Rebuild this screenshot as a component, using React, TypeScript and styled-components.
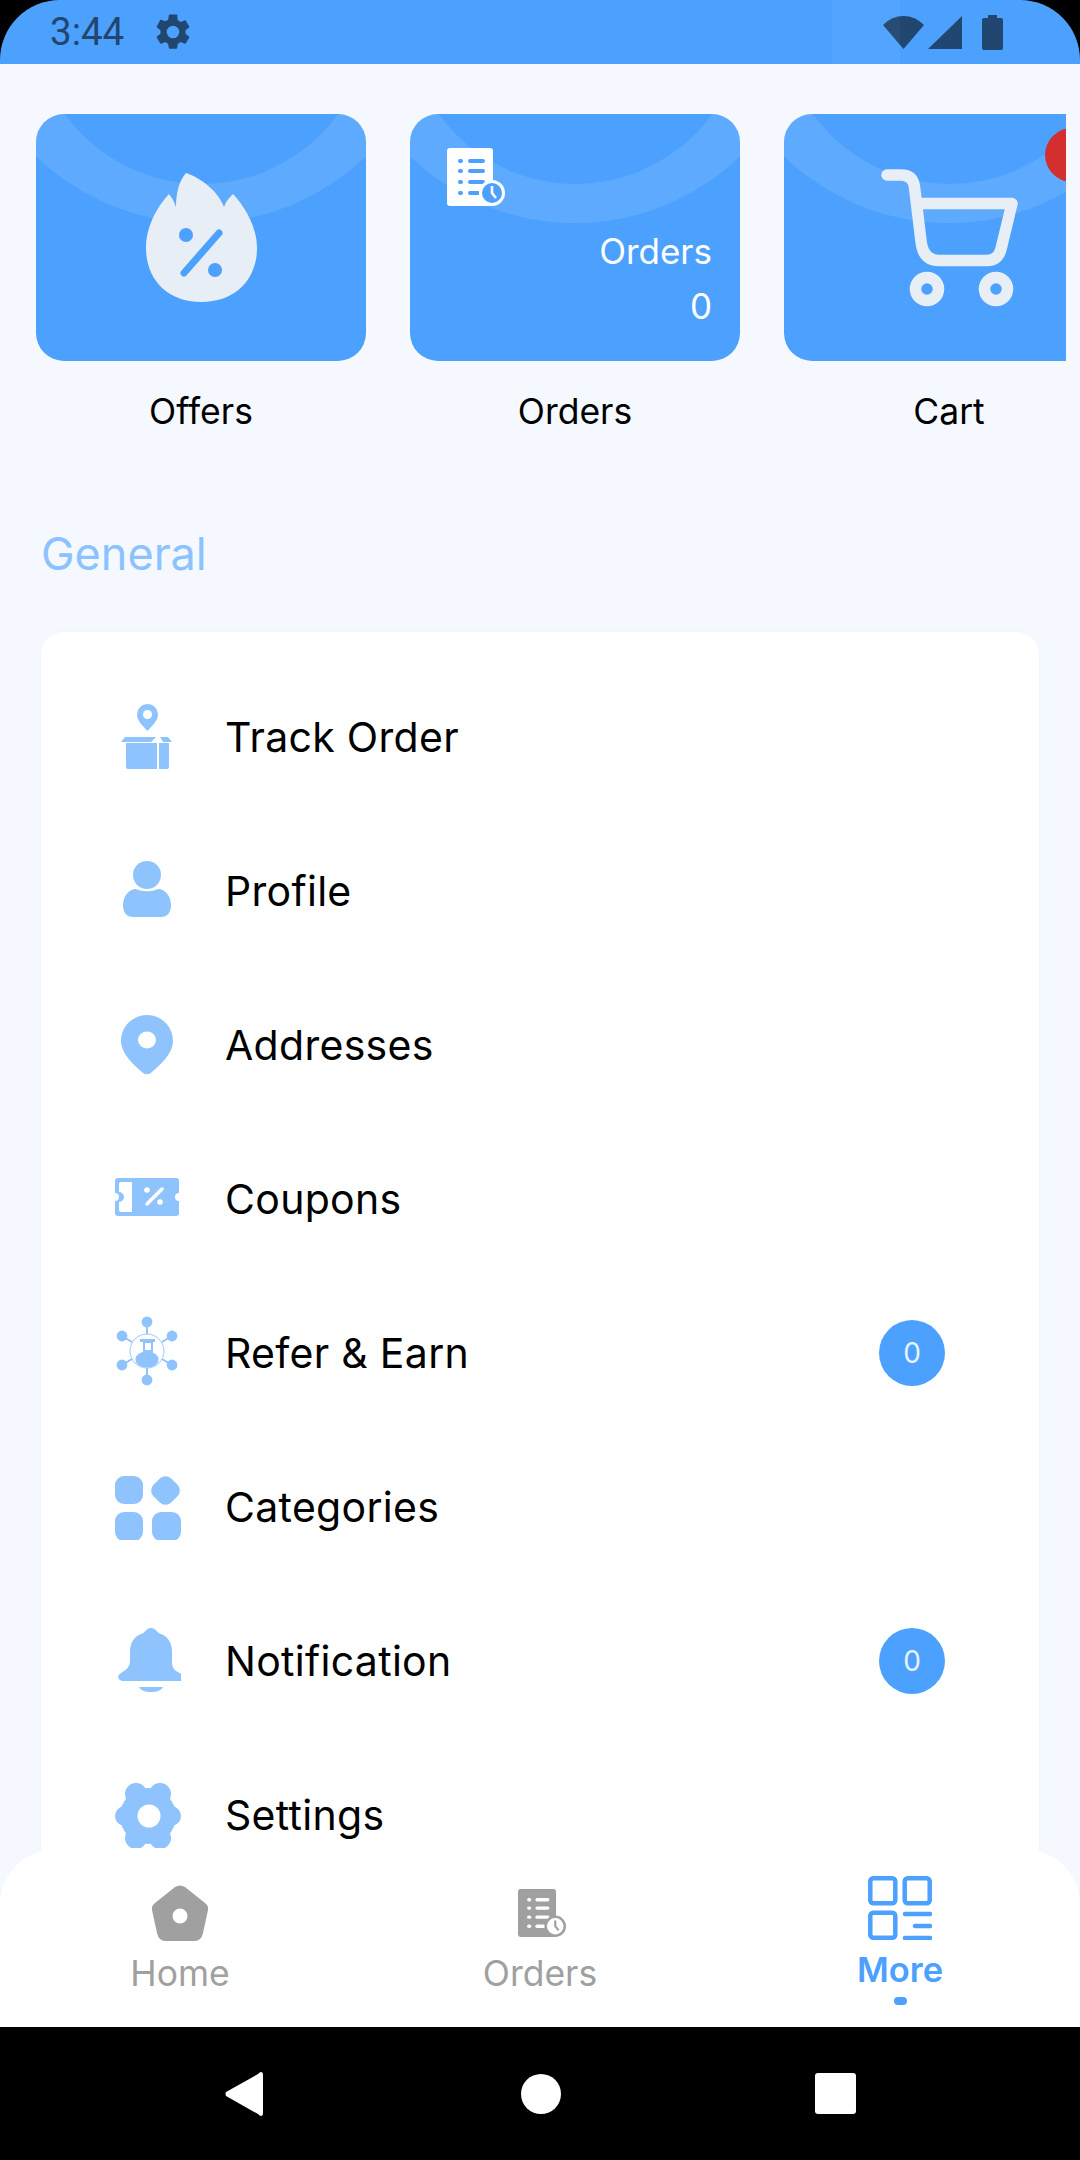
import React from "react";
import styled, { createGlobalStyle } from "styled-components";

const BLUE = "#4ca1ff";
const LIGHT = "#8fc3fd";
const PALE = "#e8eef5";
const GREY = "#a0a0a0";

const Global = createGlobalStyle`
  html, body { margin: 0; padding: 0; background: #000; }
  * { box-sizing: border-box; }
`;

const Screen = styled.div`
  width: 1080px;
  height: 2160px;
  display: flex;
  flex-direction: column;
  overflow: hidden;
  background: #000;
  font-family: Inter, "Noto Sans", sans-serif;
`;

const StatusBar = styled.div`
  height: 64px;
  flex: none;
  display: flex;
  align-items: center;
  padding: 0 77px 0 50px;
  background: ${BLUE};
  border-radius: 60px 60px 0 0;
  color: #21466f;
  position: relative;
  overflow: hidden;
`;

const StatusBand = styled.i`
  position: absolute;
  top: 0;
  bottom: 0;
  left: 832px;
  width: 68px;
  background: rgba(255, 255, 255, 0.035);
`;

const Time = styled.span`
  font: 400 38.5px/64px Roboto, sans-serif;
  width: 102px;
`;

const StatusRight = styled.div`
  margin-left: auto;
  display: flex;
  align-items: center;
`;

const SignalIcon = styled.svg`
  margin-left: 4px;
`;

const BatteryIcon = styled.svg`
  margin-left: 20px;
`;

const Body = styled.div`
  flex: 1;
  position: relative;
  overflow: hidden;
  background: #f5f9ff;
`;

const Scroll = styled.div`
  padding-top: 50px;
`;

const Shortcuts = styled.div`
  margin-left: 36px;
  width: 1030px;
  display: flex;
  gap: 44px;
  overflow: hidden;
`;

const Shortcut = styled.div`
  flex: none;
  width: 330px;
  display: flex;
  flex-direction: column;
  align-items: center;
`;

const Tile = styled.div<{ $center?: boolean }>`
  width: 330px;
  height: 247px;
  border-radius: 28px;
  background: ${BLUE};
  position: relative;
  overflow: hidden;
  display: flex;
  flex-direction: column;
  ${(p) => (p.$center ? "align-items:center;justify-content:center;" : "")}
  &::before {
    content: "";
    position: absolute;
    left: 165px;
    top: -128px;
    width: 474px;
    height: 474px;
    margin-left: -237px;
    margin-top: -237px;
    border-radius: 50%;
    background: rgba(255, 255, 255, 0.1);
  }
  &::after {
    content: "";
    position: absolute;
    left: 165px;
    top: -99px;
    width: 337px;
    height: 337px;
    margin-left: -168.5px;
    margin-top: -168.5px;
    border-radius: 50%;
    background: ${BLUE};
  }
  > * {
    position: relative;
    z-index: 1;
  }
`;

const OrdersTileBody = styled.div`
  padding: 34px 19px 0 37px;
  display: flex;
  flex-direction: column;
  flex: 1;
`;

const TileLine = styled.div<{ $first?: boolean }>`
  align-self: flex-end;
  color: #fff;
  font-size: 35px;
  line-height: 55px;
  padding-right: 9px;
  margin-top: ${(p) => (p.$first ? "18px" : "0")};
`;

const RedDot = styled.span`
  position: absolute !important;
  top: 14px;
  right: 15px;
  width: 54px;
  height: 54px;
  border-radius: 50%;
  background: #d32f2f;
`;

const ShortcutLabel = styled.div`
  margin-top: 29px;
  font-size: 35.5px;
  line-height: 44px;
  color: #000;
`;

const SectionTitle = styled.h2`
  margin: 95px 0 53px 41px;
  font-size: 45px;
  line-height: 50px;
  font-weight: 400;
  color: #8cc2ff;
`;

const MenuCard = styled.div`
  margin: 0 41px;
  padding-top: 28px;
  background: #fff;
  border-radius: 22px;
  box-shadow: 0 0 6px rgba(120, 160, 220, 0.05);
`;

const Row = styled.div`
  height: 154px;
  display: flex;
  align-items: center;
  padding: 0 94px 0 74px;
`;

const RowIcon = styled.svg<{ $free?: boolean }>`
  width: 66px;
  height: 66px;
  flex: none;
  overflow: ${(p) => (p.$free ? "visible" : "hidden")};
  color: ${LIGHT};
`;

const RowLabel = styled.span`
  margin-left: 44px;
  font-size: 41px;
  letter-spacing: 0.3px;
  color: #000;
`;

const Count = styled.span`
  margin-left: auto;
  width: 66px;
  height: 66px;
  border-radius: 50%;
  background: ${BLUE};
  color: #e8f2ff;
  font-size: 28px;
  display: flex;
  align-items: center;
  justify-content: center;
`;

const BottomNav = styled.nav`
  position: absolute;
  left: 0;
  right: 0;
  bottom: 0;
  height: 178px;
  background: #fff;
  border-radius: 56px 56px 0 0;
  display: grid;
  grid-template-columns: repeat(3, 360px);
`;

const NavItem = styled.div<{ $active?: boolean }>`
  display: flex;
  flex-direction: column;
  align-items: center;
  padding-top: ${(p) => (p.$active ? "27px" : "32px")};
  color: ${(p) => (p.$active ? BLUE : GREY)};
`;

const NavSlot = styled.div<{ $nudge?: boolean }>`
  height: 64px;
  display: flex;
  align-items: center;
  justify-content: center;
  margin-left: ${(p) => (p.$nudge ? "4px" : "0")};
`;

const NavLabel = styled.div<{ $active?: boolean }>`
  margin-top: ${(p) => (p.$active ? "8px" : "7px")};
  font-size: ${(p) => (p.$active ? "34.5px" : "35.5px")};
  line-height: 44px;
  font-weight: ${(p) => (p.$active ? 600 : 400)};
`;

const NavDot = styled.span`
  width: 13px;
  height: 8px;
  margin-top: 5px;
  border-radius: 4px;
  background: ${BLUE};
`;

const SystemBar = styled.div`
  height: 133px;
  flex: none;
  background: #000;
  display: flex;
  align-items: center;
  justify-content: center;
  gap: 254px;
`;

const BackIcon = styled.svg`
  margin-right: 4px;
`;

const SysCircle = styled.span`
  width: 40px;
  height: 40px;
  border-radius: 50%;
  background: #fff;
`;

const SysSquare = styled.span`
  width: 41px;
  height: 41px;
  border-radius: 3px;
  background: #fff;
`;

const OrdersIcon = ({ size, fg, cut }: { size: number; fg: string; cut: string }) => (
  <svg width={size} height={size} viewBox="0 0 58 58">
    <rect x="0" y="0" width="46" height="58" rx="3" fill={fg} />
    {[13, 23, 34, 45].map((y, i) => (
      <g key={y}>
        <rect x="11" y={y - 2} width="5" height="4" rx="2" fill={cut} />
        <rect x="21" y={y - 2} width={i === 3 ? 12 : 17} height="4" rx="2" fill={cut} />
      </g>
    ))}
    <circle cx="45" cy="45" r="13" fill={fg} />
    <circle cx="45" cy="45" r="10" fill={cut} />
    <path d="M45 38v7l4 5" stroke={fg} strokeWidth="2.6" fill="none" />
  </svg>
);

const gearLobes: [number, number, number][] = [
  [-23, 0, 10],
  [23, 0, 10],
  [-12, -22, 11],
  [12, -22, 11],
  [-12, 22, 11],
  [12, 22, 11],
];

export default function App() {
  return (
    <Screen>
      <Global />
      <StatusBar>
        <StatusBand />
        <Time>3:44</Time>
        <svg width="42" height="42" viewBox="0 0 24 24" fill="currentColor">
          <path d="M19.14 12.94c.04-.3.06-.61.06-.94 0-.32-.02-.64-.07-.94l2.03-1.58a.49.49 0 0 0 .12-.61l-1.92-3.32a.49.49 0 0 0-.59-.22l-2.39.96c-.5-.38-1.03-.7-1.62-.94l-.36-2.54A.48.48 0 0 0 13.92 2h-3.84c-.24 0-.43.17-.47.41l-.36 2.54c-.59.24-1.13.57-1.62.94l-2.39-.96a.49.49 0 0 0-.59.22L2.73 8.87a.48.48 0 0 0 .12.61l2.03 1.58c-.05.3-.08.63-.08.94s.02.64.07.94l-2.03 1.58a.49.49 0 0 0-.12.61l1.92 3.32c.12.22.37.29.59.22l2.39-.96c.5.38 1.03.7 1.62.94l.36 2.54c.05.24.24.41.48.41h3.84c.24 0 .44-.17.47-.41l.36-2.54c.59-.24 1.13-.56 1.62-.94l2.39.96c.22.08.47 0 .59-.22l1.92-3.32a.48.48 0 0 0-.12-.61l-2.01-1.58zM12 15.6A3.6 3.6 0 1 1 12 8.400a3.6 3.6 0 0 1 0 7.2z" />
        </svg>
        <StatusRight>
          <svg width="41" height="33" viewBox="0 0 41 33" fill="currentColor">
            <path d="M20.500 33 L0 9 Q9 0 20.500 0 Q32 0 41 9 Z" />
          </svg>
          <SignalIcon width="34" height="33" viewBox="0 0 34 33" fill="currentColor">
            <path d="M0 33 L34 0 V33 Z" />
          </SignalIcon>
          <BatteryIcon width="21" height="35" viewBox="0 0 21 35" fill="currentColor">
            <path d="M6 0h9v3h4a2 2 0 0 1 2 2v28a2 2 0 0 1-2 2H2a2 2 0 0 1-2-2V5a2 2 0 0 1 2-2h4z" />
          </BatteryIcon>
        </StatusRight>
      </StatusBar>

      <Body>
        <Scroll>
          <Shortcuts>
            <Shortcut>
              <Tile $center>
                <svg width="111" height="129" viewBox="0 0 111 129">
                  <path
                    d="M55.500 129C20 129 0 105 0 75C0 55 10 35 23 21C26 25 28 28 30 34C30 20 33 8 40 0C55 5 72 18 78 34C80 28 83 25 87 21C100 35 111 55 111 75C111 105 91 129 55.500 129Z"
                    fill={PALE}
                  />
                  <path d="M73 60L38 100" stroke={BLUE} strokeWidth="7" strokeLinecap="round" />
                  <circle cx="40" cy="62" r="7" fill={BLUE} />
                  <circle cx="69" cy="97" r="7" fill={BLUE} />
                </svg>
              </Tile>
              <ShortcutLabel>Offers</ShortcutLabel>
            </Shortcut>
            <Shortcut>
              <Tile>
                <OrdersTileBody>
                  <OrdersIcon size={58} fg="#fff" cut={BLUE} />
                  <TileLine $first>Orders</TileLine>
                  <TileLine>0</TileLine>
                </OrdersTileBody>
              </Tile>
              <ShortcutLabel>Orders</ShortcutLabel>
            </Shortcut>
            <Shortcut>
              <Tile $center>
                <svg width="137" height="138" viewBox="0 0 137 138" fill="none" stroke={PALE} strokeWidth="11.5" strokeLinecap="round" strokeLinejoin="round">
                  <path d="M6 6H20Q32 6 33.500 18L40 72Q42 91.500 58 91.500H106Q117 91.500 120 80L131 34.500H36" />
                  <circle cx="46" cy="120" r="11.500" />
                  <circle cx="115" cy="120" r="11.500" />
                </svg>
                <RedDot />
              </Tile>
              <ShortcutLabel>Cart</ShortcutLabel>
            </Shortcut>
          </Shortcuts>

          <SectionTitle>General</SectionTitle>

          <MenuCard>
            <Row>
              <RowIcon viewBox="0 0 66 66" fill="currentColor">
                <path d="M32.500 27C26 20 22 16 22 10.500a10.500 10.500 0 0 1 21 0C43 16 39 20 32.500 27z" />
                <circle cx="32.500" cy="10.500" r="4.500" fill="#fff" />
                <path d="M11 39H42V65H13a2 2 0 0 1-2-2zM44 39H54V63a2 2 0 0 1-2 2H44z" />
                <path d="M10 33H41L36 38H6zM45 33H53L57 38H48z" />
              </RowIcon>
              <RowLabel>Track Order</RowLabel>
            </Row>
            <Row>
              <RowIcon viewBox="0 0 66 66" fill="currentColor">
                <circle cx="32" cy="17" r="14" />
                <path d="M8 47C8 38 14 31 21 31C27 34 37 34 43 31C50 31 56 38 56 47C56 55 52 59 46 59H18C12 59 8 55 8 47z" />
              </RowIcon>
              <RowLabel>Profile</RowLabel>
            </Row>
            <Row>
              <RowIcon viewBox="0 0 66 66" fill="currentColor">
                <path d="M32 3C46 3 58 14 58 29C58 42 44 54 37 60C34 63 30 63 27 60C20 54 6 42 6 29C6 14 18 3 32 3Z" />
                <ellipse cx="32" cy="28" rx="9" ry="8.500" fill="#fff" />
              </RowIcon>
              <RowLabel>Addresses</RowLabel>
            </Row>
            <Row>
              <RowIcon viewBox="0 0 66 66" fill="currentColor">
                <path d="M3 12H61a3 3 0 0 1 3 3V27a4 4 0 0 0 0 8V47a3 3 0 0 1-3 3H3a3 3 0 0 1-3-3V35a4 4 0 0 0 0-8V15a3 3 0 0 1 3-3z" />
                <path d="M6 16H17V46H6a2 2 0 0 1-2-2V36a5 5 0 0 0 0-10V18a2 2 0 0 1 2-2z" fill="#fff" />
                <path d="M32 38L47 23" stroke="#fff" strokeWidth="3.500" strokeLinecap="round" />
                <circle cx="32" cy="24" r="2.800" fill="#fff" />
                <circle cx="45" cy="36" r="2.800" fill="#fff" />
              </RowIcon>
              <RowLabel>Coupons</RowLabel>
            </Row>
            <Row>
              <RowIcon $free viewBox="0 0 66 66" fill="currentColor">
                <circle cx="32" cy="31" r="17" fill="none" stroke="currentColor" strokeWidth="0.900" />
                {[[32, 2], [32, 60], [7, 16], [57, 16], [7, 45], [57, 45]].map(([x, y]) => (
                  <circle key={`${x}-${y}`} cx={x} cy={y} r="5.400" />
                ))}
                <path d="M32 2V14M32 48V60M7 16L17 22M57 16L47 22M7 45L17 39M57 45L47 39" stroke="currentColor" strokeWidth="2" />
                <ellipse cx="32" cy="39.500" rx="11.500" ry="8" />
                <path d="M25 19H40V22H38V33H28V22H25zM30 23V30H36V23z" />
              </RowIcon>
              <RowLabel>Refer &amp; Earn</RowLabel>
              <Count>0</Count>
            </Row>
            <Row>
              <RowIcon viewBox="0 0 66 66" fill="currentColor">
                <rect x="0" y="2" width="28" height="28" rx="9" />
                <rect x="38" y="4" width="25" height="25" rx="8" transform="rotate(45 50.500 16.500)" />
                <rect x="0" y="38" width="28" height="29" rx="9" />
                <rect x="37" y="38" width="29" height="29" rx="9" />
              </RowIcon>
              <RowLabel>Categories</RowLabel>
            </Row>
            <Row>
              <RowIcon viewBox="0 0 66 66" fill="currentColor">
                <path d="M36 0C41 0 42 5 46 6C54 9 57 16 57 24V34C57 42 62 44 69 47V53H9C3 53 1 48 6 45C11 42 15 39 15 33V24C15 16 18 9 26 6C30 5 31 0 36 0Z" />
                <path d="M24 59H48C46 63 41 64 36 64C31 64 26 63 24 59Z" />
              </RowIcon>
              <RowLabel>Notification</RowLabel>
              <Count>0</Count>
            </Row>
            <Row>
              <RowIcon viewBox="0 0 66 66" fill="currentColor">
                <circle cx="33" cy="34" r="28" />
                {gearLobes.map(([dx, dy, r]) => (
                  <circle key={`${dx}-${dy}`} cx={33 + dx} cy={34 + dy} r={r} />
                ))}
                <circle cx="34" cy="34" r="11.500" fill="#fff" />
              </RowIcon>
              <RowLabel>Settings</RowLabel>
            </Row>
          </MenuCard>
        </Scroll>

        <BottomNav>
          <NavItem>
            <NavSlot>
              <svg width="56" height="56" viewBox="0 0 56 56">
                <path
                  d="M23 2Q28 -1 33 2L53 18Q57 21 56 25L51 48Q49 56 43 56H13Q7 56 5 48L0 25Q-1 21 3 18Z"
                  fill={GREY}
                />
                <circle cx="28" cy="31" r="7.500" fill="#fff" />
              </svg>
            </NavSlot>
            <NavLabel>Home</NavLabel>
          </NavItem>
          <NavItem>
            <NavSlot $nudge>
              <OrdersIcon size={48} fg={GREY} cut="#fff" />
            </NavSlot>
            <NavLabel>Orders</NavLabel>
          </NavItem>
          <NavItem $active>
            <NavSlot>
              <svg width="64" height="64" viewBox="0 0 64 64" fill="none" stroke={BLUE} strokeWidth="4.500" strokeLinecap="round">
                <rect x="2.300" y="2.300" width="25" height="25" rx="3" />
                <rect x="36.700" y="2.300" width="25" height="25" rx="3" />
                <rect x="2.300" y="36.700" width="25" height="25" rx="3" />
                <path d="M37 38H62M47 50H62M37 62H62" />
              </svg>
            </NavSlot>
            <NavLabel $active>More</NavLabel>
            <NavDot />
          </NavItem>
        </BottomNav>
      </Body>

      <SystemBar>
        <BackIcon width="38" height="44" viewBox="0 0 38 44" fill="#fff">
          <path d="M36 0Q38 0 38 3V41Q38 44 36 44Q35 44 33 42L1 24Q0 22 1 20L33 2Q35 0 36 0Z" />
        </BackIcon>
        <SysCircle />
        <SysSquare />
      </SystemBar>
    </Screen>
  );
}
